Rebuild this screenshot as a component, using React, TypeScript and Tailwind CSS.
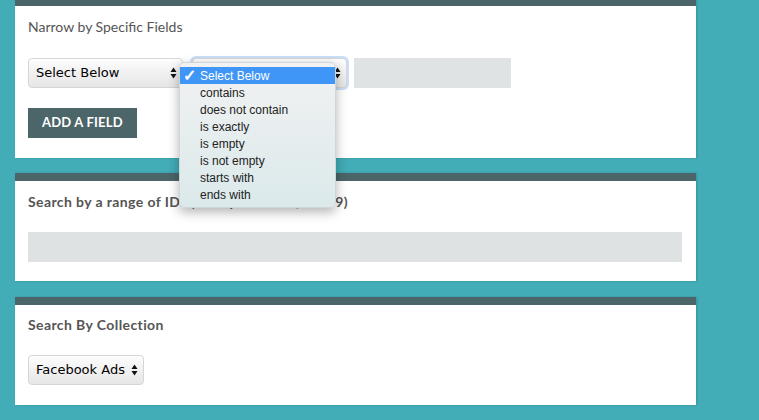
import React from 'react';

const Arrows = () => (
  <svg width="7" height="12" viewBox="0 0 7 12" className="shrink-0">
    <path d="M3.5 0.5 L6.5 5 L0.5 5 Z" fill="#111" />
    <path d="M3.5 11.5 L6.5 7 L0.5 7 Z" fill="#111" />
  </svg>
);

function FakeSelect({ label, width, focused }: { label: string; width: string; focused?: boolean }) {
  const box = (
    <div
      className={`${width} h-[30px] flex items-center justify-between pl-[7px] pr-[5px] rounded-[4px] border border-[#d6d6d6] bg-gradient-to-b from-[#fdfdfd] via-[#f1f1f1] to-[#e6e6e6] shadow-[inset_0_1px_0_#fff] text-[13px] text-black`}
      style={{ fontFamily: '"DejaVu Sans", "Liberation Sans", sans-serif' }}
    >
      <span>{label}</span>
      <Arrows />
    </div>
  );
  if (!focused) return box;
  return <div className="rounded-[6px] p-[2px] bg-[#c9def7]">{box}</div>;
}

const options = ['contains', 'does not contain', 'is exactly', 'is empty', 'is not empty', 'starts with', 'ends with'];

export default function App() {
  return (
    <div
      className="relative min-h-[420px] w-full bg-[#42acb7] pl-[15px] pr-[63px] pb-[15px] text-[#555]"
      style={{ fontFamily: 'Lato, "Open Sans", sans-serif' }}
    >
      {/* Narrow by fields */}
      <section className="bg-white border-t-[6px] border-[#4c6568] pt-[11px] pb-[20px] px-[13px] shadow-[1px_0_2px_rgba(0,0,0,0.15)]">
        <h3 className="text-[14px] leading-[20px]">Narrow by Specific Fields</h3>
        <div className="flex items-center mt-[19px] gap-[5px]">
          <FakeSelect label="Select Below" width="w-[155px]" />
          <div className="ml-[2px]">
            <FakeSelect label="" width="w-[155px]" focused />
          </div>
          <div className="w-[157px] h-[30px] bg-[#dfe3e3]" />
        </div>
        <button className="mt-[18px] h-[30px] px-[14px] bg-[#4c6568] text-white text-[13px] font-bold tracking-[0.2px]">
          ADD A FIELD
        </button>
      </section>

      {/* Range of IDs */}
      <section className="mt-[15px] bg-white border-t-[8px] border-[#4c6568] pt-[11px] pb-[19px] px-[13px] shadow-[1px_0_2px_rgba(0,0,0,0.15)]">
        <h3 className="text-[14px] leading-[20px] font-bold tracking-[0.4px]">Search by a range of IDs (example: 1 to 5, or 1-9)</h3>
        <div className="mt-[20px] h-[30px] w-[654px] bg-[#dee2e3]" />
      </section>

      {/* Collection */}
      <section className="mt-[16px] bg-white border-t-[8px] border-[#4c6568] pt-[10px] pb-[20px] px-[13px] shadow-[1px_0_2px_rgba(0,0,0,0.15)]">
        <h3 className="text-[14px] leading-[20px] font-bold tracking-[0.4px]">Search By Collection</h3>
        <div className="mt-[20px]">
          <FakeSelect label="Facebook Ads" width="w-[116px]" />
        </div>
      </section>

      {/* Open dropdown menu */}
      <div
        className="absolute left-[179px] top-[62px] w-[157px] py-[4px] rounded-[5px] bg-gradient-to-b from-[#f2f2f2] to-[#dbe9eb] border border-[#cfd6d7] shadow-[0_4px_12px_rgba(0,0,0,0.3)] text-[12px] text-[#222]"
        style={{ fontFamily: '"Liberation Sans", Arial, sans-serif' }}
      >
        <div className="h-[17px] flex items-center bg-[#3f96f7] text-white">
          <span className="w-[20px] pl-[3px] text-[16px] font-bold leading-none">✓</span>
          <span>Select Below</span>
        </div>
        {options.map((o) => (
          <div key={o} className="h-[17px] flex items-center pl-[20px]">
            {o}
          </div>
        ))}
      </div>
    </div>
  );
}
